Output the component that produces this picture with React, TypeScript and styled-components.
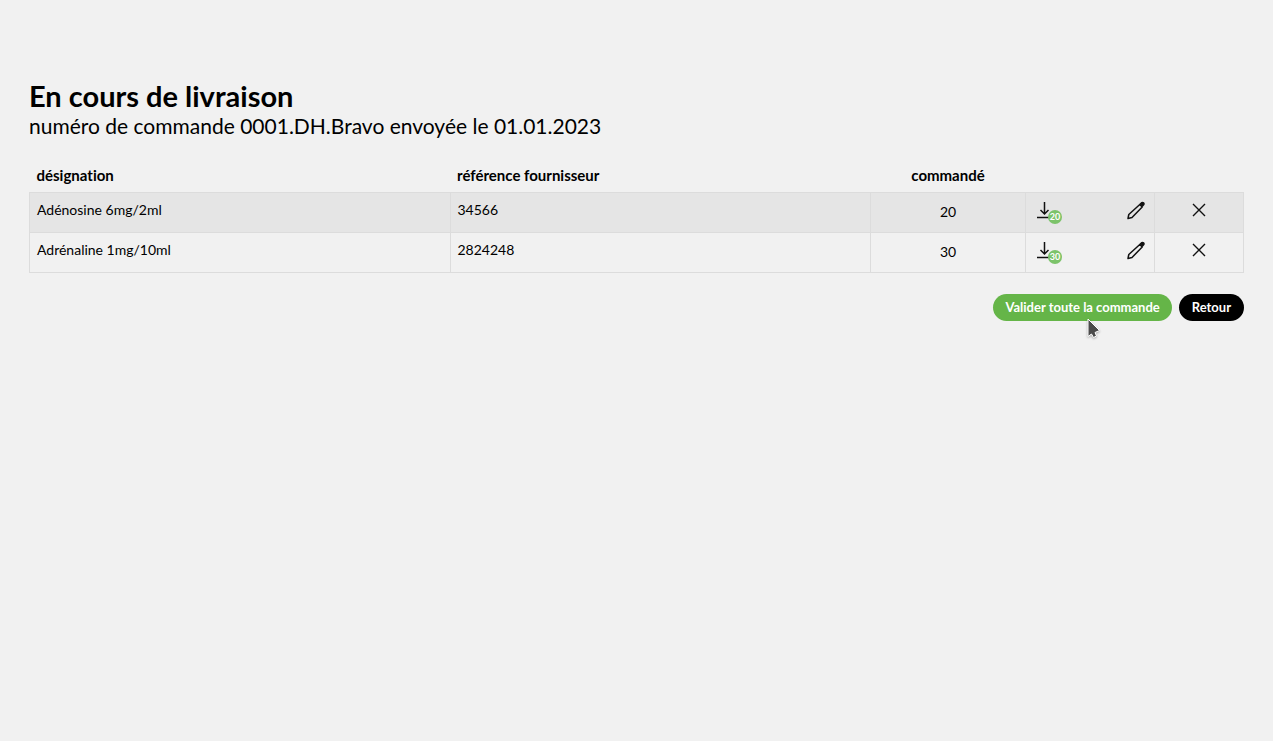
import React from 'react';
import styled, { createGlobalStyle } from 'styled-components';

const GlobalStyle = createGlobalStyle`
  * { box-sizing: border-box; }
  body {
    margin: 0;
    background: #f1f1f1;
    color: #000;
    font-family: Lato, sans-serif;
    font-size: 14px;
    line-height: 20px;
    font-variant-ligatures: none;
  }
`;

const Page = styled.main`
  padding: 79px 29px 40px;
`;

const Title = styled.h1`
  margin: 0;
  font-size: 29px;
  line-height: 34px;
  font-weight: 700;
`;

const Subtitle = styled.p`
  margin: 0 0 27px;
  font-size: 21px;
  line-height: 25px;
`;

const Table = styled.table`
  width: 100%;
  border-collapse: collapse;
  table-layout: fixed;
`;

const Col = styled.col<{ $w?: string }>`
  width: ${(p) => p.$w ?? 'auto'};
`;

const Head = styled.th<{ $center?: boolean }>`
  padding: 0 7px 7px;
  font-size: 15px;
  font-weight: 700;
  text-align: ${(p) => (p.$center ? 'center' : 'left')};
`;

const Row = styled.tr`
  height: 40px;
  &:nth-child(odd) { background: #e5e5e5; }
`;

const Cell = styled.td<{ $center?: boolean }>`
  border: 1px solid #dcdcdc;
  padding: ${(p) => (p.$center ? '0 7px 2px' : '0 7px 6px')};
  text-align: ${(p) => (p.$center ? 'center' : 'left')};
`;

const Tools = styled.div`
  display: flex;
  justify-content: space-between;
  align-items: center;
  padding: 2px 2px 0 3px;
`;

const IconButton = styled.button`
  position: relative;
  display: inline-flex;
  padding: 0;
  border: 0;
  background: none;
  color: #111;
  cursor: pointer;
`;

const Badge = styled.span`
  position: absolute;
  top: 9px;
  left: 12px;
  width: 14px;
  height: 14px;
  border-radius: 50%;
  background: #7cc36a;
  color: #fff;
  font-family: Lato, sans-serif;
  font-size: 9px;
  font-weight: 700;
  line-height: 14px;
  text-align: center;
`;

const Actions = styled.div`
  display: flex;
  justify-content: flex-end;
  gap: 7px;
  margin-top: 21px;
`;

const Button = styled.button<{ $primary?: boolean }>`
  position: relative;
  height: 27px;
  padding: 0 ${(p) => (p.$primary ? '12px' : '13px')} 2px;
  border: 0;
  border-radius: 14px;
  background: ${(p) => (p.$primary ? '#65b548' : '#000')};
  color: #fff;
  font-family: inherit;
  font-size: 13px;
  font-weight: 700;
  line-height: 20px;
  cursor: pointer;
`;

const Pointer = styled.svg`
  position: absolute;
  left: 94px;
  top: 24px;
  filter: drop-shadow(0 1px 1px rgba(0, 0, 0, 0.3));
`;

const items = [
  { name: 'Adénosine 6mg/2ml', reference: '34566', quantity: 20 },
  { name: 'Adrénaline 1mg/10ml', reference: '2824248', quantity: 30 },
];

const ReceiveIcon = () => (
  <svg width="18" height="20" viewBox="0 0 18 20" fill="none" stroke="currentColor" strokeWidth="1.5">
    <path d="M8.500 1v12M4.500 9l4 4 4-4" />
    <path d="M1 16.500h14" />
  </svg>
);

const PencilIcon = () => (
  <svg width="18" height="20" viewBox="0 0 18 20" fill="none" stroke="currentColor" strokeWidth="1.500" strokeLinejoin="round">
    <path d="M1 17.500l.8-4L12.800 3.500l2.400 2.500L5 16.500z" />
    <path d="M13.500 2.900l1.400-1.300q.8-.5 1.600.3t.3 1.600l-1.300 1.500z" fill="currentColor" />
  </svg>
);

const CloseIcon = () => (
  <svg width="14" height="14" viewBox="0 0 14 14" fill="none" stroke="currentColor" strokeWidth="1.400">
    <path d="M1 1l12 12M13 1L1 13" />
  </svg>
);

export default function App() {
  return (
    <>
      <GlobalStyle />
      <Page>
        <Title>En cours de livraison</Title>
        <Subtitle>numéro de commande 0001.DH.Bravo envoyée le 01.01.2023</Subtitle>
        <Table>
          <colgroup>
            <Col />
            <Col />
            <Col $w="155px" />
            <Col $w="129px" />
            <Col $w="89px" />
          </colgroup>
          <thead>
            <tr>
              <Head scope="col">désignation</Head>
              <Head scope="col">référence fournisseur</Head>
              <Head scope="col" $center>commandé</Head>
              <td />
              <td />
            </tr>
          </thead>
          <tbody>
            {items.map((item) => (
              <Row key={item.reference}>
                <Cell>{item.name}</Cell>
                <Cell>{item.reference}</Cell>
                <Cell $center>{item.quantity}</Cell>
                <Cell>
                  <Tools>
                    <IconButton aria-label="Réceptionner">
                      <ReceiveIcon />
                      <Badge>{item.quantity}</Badge>
                    </IconButton>
                    <IconButton aria-label="Modifier"><PencilIcon /></IconButton>
                  </Tools>
                </Cell>
                <Cell $center>
                  <IconButton aria-label="Supprimer"><CloseIcon /></IconButton>
                </Cell>
              </Row>
            ))}
          </tbody>
        </Table>
        <Actions>
          <Button $primary>
            Valider toute la commande
            <Pointer width="14" height="22" viewBox="0 0 14 22" aria-hidden="true">
              <path d="M1 1v17.500l3.500-2.500 2 3.500 3-1.500-1.500-3.500 4.500-2z" fill="#4a4a4a" stroke="#fff" />
            </Pointer>
          </Button>
          <Button>Retour</Button>
        </Actions>
      </Page>
    </>
  );
}
